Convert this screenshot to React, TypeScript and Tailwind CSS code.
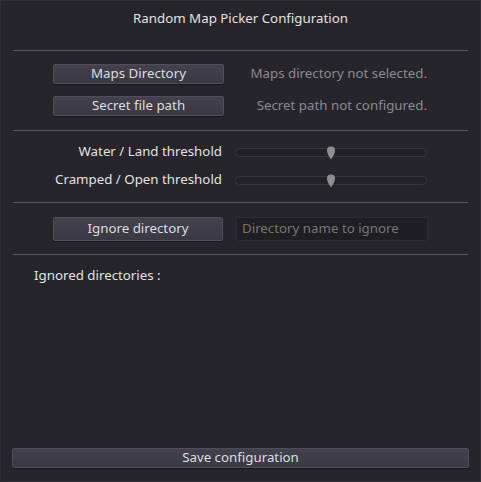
import React from 'react'

function Separator() {
  return <div className="mx-[12px] h-px bg-[#56595d]" />
}

function Btn({ label, className = '' }: { label: string; className?: string }) {
  return (
    <button
      className={
        'flex items-center justify-center rounded-[2px] border border-[#4f4e5a] bg-gradient-to-b from-[#42414d] to-[#393843] pb-px text-[#dedede] shadow-[0_1px_0_#18171b] ' +
        className
      }
    >
      {label}
    </button>
  )
}

function Slider({ value }: { value: number }) {
  return (
    <div className="relative h-[20px] w-[192px]">
      <div className="absolute left-0 right-0 top-[6px] h-[9px] rounded-full border border-[#37363d] bg-[#222126]" />
      <svg
        className="absolute top-[4px]"
        style={{ left: `${value * 192 - 5}px` }}
        width="10"
        height="14"
        viewBox="0 0 10 14"
      >
        <path d="M5 0.5 C8 0.5 9 2 9 4.5 C9 8 6.5 11 5 13.5 C3.5 11 1 8 1 4.5 C1 2 2 0.5 5 0.5 Z" fill="#8e8e90" />
      </svg>
    </div>
  )
}

export default function App() {
  return (
    <div
      className="flex h-[482px] w-[481px] flex-col border border-[#302f36] bg-[#26252b] text-[13.3px] text-[#e2e2e2]"
      style={{ fontFamily: '"Noto Sans", "DejaVu Sans", sans-serif' }}
    >
      <div className="flex h-[35px] items-center justify-center">Random Map Picker Configuration</div>
      <div className="mt-[14px]">
        <Separator />
      </div>

      <div className="mt-[13px] flex flex-col gap-[12px]">
        <div className="flex h-[20px] items-center">
          <Btn label="Maps Directory" className="ml-[52px] h-[20px] w-[171px]" />
          <span className="ml-auto mr-[53px] text-[#8b8b8e]">Maps directory not selected.</span>
        </div>
        <div className="flex h-[20px] items-center">
          <Btn label="Secret file path" className="ml-[52px] h-[20px] w-[171px]" />
          <span className="ml-auto mr-[53px] text-[#8b8b8e]">Secret path not configured.</span>
        </div>
      </div>

      <div className="mt-[14px]">
        <Separator />
      </div>

      <div className="mt-[11px] flex flex-col gap-[8px]">
        <div className="flex h-[20px] items-center">
          <span className="w-[222px] pr-[1px] text-right">Water / Land threshold</span>
          <div className="ml-[12px]">
            <Slider value={0.5} />
          </div>
        </div>
        <div className="flex h-[20px] items-center">
          <span className="w-[222px] pr-[1px] text-right">Cramped / Open threshold</span>
          <div className="ml-[12px]">
            <Slider value={0.5} />
          </div>
        </div>
      </div>

      <div className="mt-[12px]">
        <Separator />
      </div>

      <div className="mt-[14px] flex h-[24px] items-center">
        <Btn label="Ignore directory" className="ml-[52px] h-[24px] w-[170px] pb-[2px]" />
        <input
          placeholder="Directory name to ignore"
          className="ml-[13px] h-[24px] w-[192px] rounded-[2px] border border-[#2d2c33] bg-[#1f1e23] px-[5px] pb-[2px] text-[#e2e2e2] outline-none placeholder:text-[#76767a]"
        />
      </div>

      <div className="mt-[13px]">
        <Separator />
      </div>

      <div className="ml-[33px] mt-[11px] flex h-[20px] items-center">Ignored directories :</div>

      <div className="flex-1" />

      <Btn label="Save configuration" className="mx-[11px] mb-[13px] h-[20px]" />
    </div>
  )
}
